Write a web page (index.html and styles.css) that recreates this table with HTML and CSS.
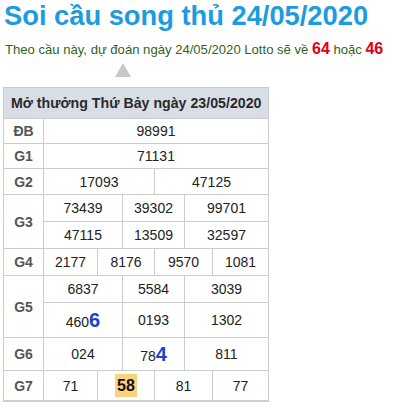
FILE: index.html
```html
<!DOCTYPE html>
<html lang="vi">
<head>
<meta charset="utf-8">
<title>Soi cầu song thủ 24/05/2020</title>
<link rel="stylesheet" href="styles.css">
</head>
<body>
<h1 class="title">Soi cầu song thủ 24/05/2020</h1>
<p class="predict">Theo cầu này, dự đoán ngày 24/05/2020 Lotto sẽ về <b class="hot">64</b> hoặc <b class="hot">46</b></p>
<div class="pointer-row"><span class="pointer"></span></div>
<table class="kq">
  <colgroup>
    <col class="c-label"><col class="c1"><col class="c2"><col class="c3"><col class="c4"><col class="c5"><col class="c6">
  </colgroup>
  <thead>
    <tr class="r-head"><th colspan="7">Mở thưởng Thứ Bảy ngày 23/05/2020</th></tr>
  </thead>
  <tbody>
    <tr class="r25"><td class="lbl">ĐB</td><td colspan="6">98991</td></tr>
    <tr class="r25"><td class="lbl">G1</td><td colspan="6">71131</td></tr>
    <tr class="r26"><td class="lbl">G2</td><td colspan="3">17093</td><td colspan="3">47125</td></tr>
    <tr class="r27"><td class="lbl" rowspan="2">G3</td><td colspan="2">73439</td><td colspan="2">39302</td><td colspan="2">99701</td></tr>
    <tr class="r27"><td colspan="2">47115</td><td colspan="2">13509</td><td colspan="2">32597</td></tr>
    <tr class="r27"><td class="lbl">G4</td><td>2177</td><td colspan="2">8176</td><td colspan="2">9570</td><td>1081</td></tr>
    <tr class="r27"><td class="lbl" rowspan="2">G5</td><td colspan="2">6837</td><td colspan="2">5584</td><td colspan="2">3039</td></tr>
    <tr class="r35"><td colspan="2">460<b class="mark">6</b></td><td colspan="2">0193</td><td colspan="2">1302</td></tr>
    <tr class="r33"><td class="lbl">G6</td><td colspan="2">024</td><td colspan="2">78<b class="mark">4</b></td><td colspan="2">811</td></tr>
    <tr class="r30"><td class="lbl">G7</td><td>71</td><td colspan="2"><b class="hit">58</b></td><td colspan="2">81</td><td>77</td></tr>
  </tbody>
</table>
</body>
</html>
```

FILE: styles.css
```css
html, body {
  margin: 0;
  padding: 0;
  background: #fff;
}
body {
  font-family: "Liberation Sans", Arial, sans-serif;
  color: #222;
}
.title {
  margin: 0 0 0 4px;
  font-size: 27.3px;
  font-weight: bold;
  line-height: 31px;
  color: #1d9be0;
}
.predict {
  margin: 8px 0 0 5px;
  font-size: 13.1px;
  line-height: 20px;
  color: #2f6420;
}
.hot {
  font-size: 16px;
  color: #e0000f;
}
.pointer-row {
  display: flex;
  padding: 3px 0 0 115px;
  height: 14px;
}
.pointer {
  width: 0;
  height: 0;
  border-left: 8px solid transparent;
  border-right: 8px solid transparent;
  border-bottom: 14px solid #c8c8c8;
}
.kq {
  margin: 10px 0 0 3px;
  width: 266px;
  table-layout: fixed;
  border-collapse: collapse;
  border: 1px solid #c4c4c4;
  border-bottom: 2px solid #cfcfcf;
  font-size: 14px;
}
.c-label { width: 40px; }
.c1 { width: 54px; }
.c2 { width: 25px; }
.c3 { width: 32px; }
.c4 { width: 30px; }
.c5 { width: 28px; }
.c6 { width: 56px; }
.kq th, .kq td {
  border: 1px solid #cdcdcd;
  padding: 0;
  text-align: center;
  vertical-align: middle;
  white-space: nowrap;
}
.r-head th {
  height: 30px;
  background: #d9dde6;
  color: #2a2a2a;
  font-size: 14.2px;
  font-weight: bold;
  text-align: left;
  padding-left: 7px;
}
.kq td.lbl {
  font-weight: bold;
  color: #555;
}
.r25 td { height: 24px; }
.r26 td { height: 25px; }
.r27 td { height: 26px; }
.r35 td { height: 34px; }
.r33 td { height: 32px; }
.r30 td { height: 29px; }
.mark {
  font-size: 20px;
  color: #1f3fd2;
}
.hit {
  display: inline-block;
  background: #fcd27f;
  color: #111;
  font-size: 16px;
  padding: 3px 2px;
  line-height: 17px;
}
```
